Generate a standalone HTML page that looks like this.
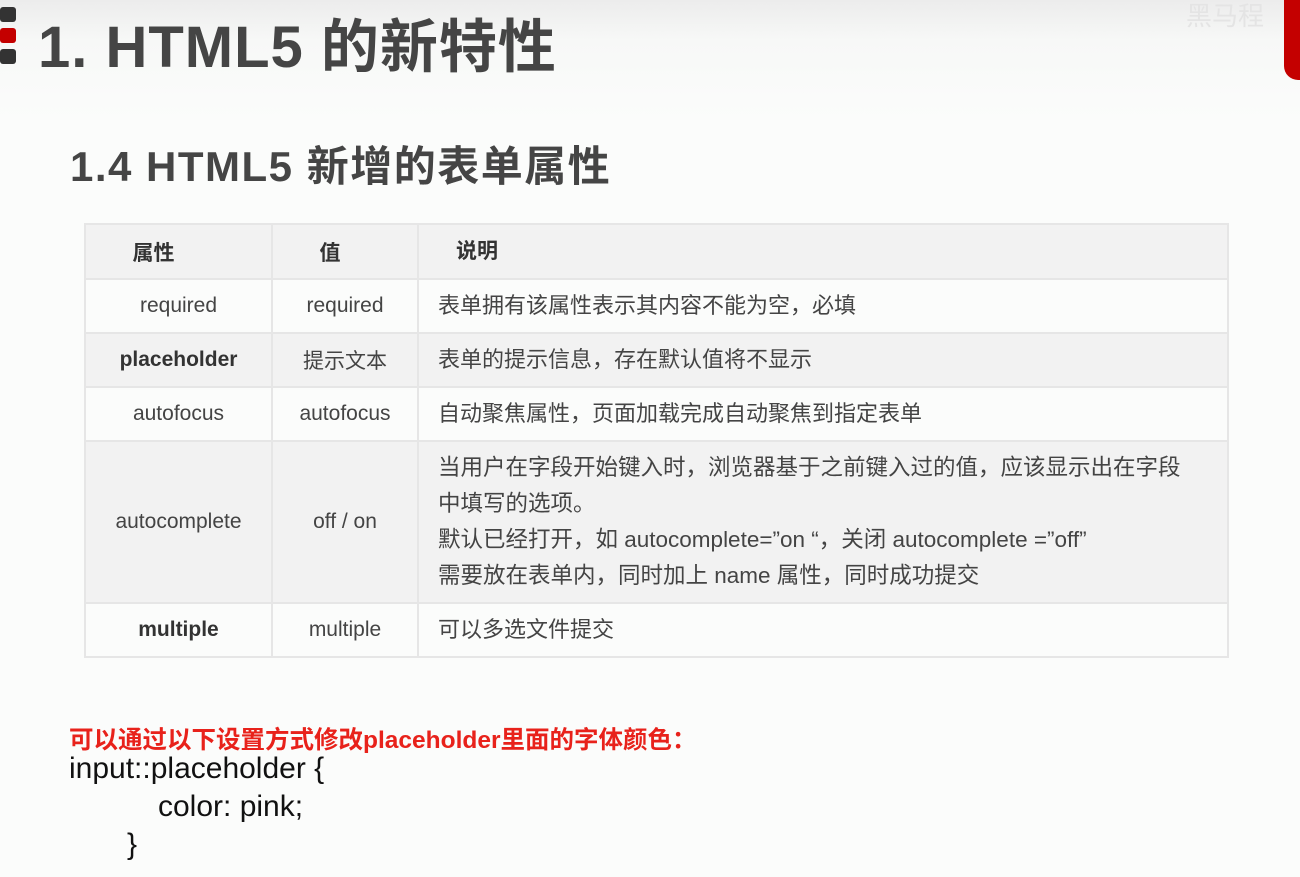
<!DOCTYPE html>
<html><head><meta charset="utf-8"><style>
body{margin:0;width:1300px;height:877px;overflow:hidden;background:linear-gradient(#ececec 0,#f7f8f7 40px,#fbfcfb 120px,#fbfcfb);font-family:"Liberation Sans","Noto Sans CJK SC",sans-serif;color:#444;position:relative}
.a{position:absolute;white-space:nowrap}
.sq{position:absolute;left:0;width:16px;height:15px;border-radius:3px;background:#333}
table{position:absolute;left:84px;top:223px;width:1145px;table-layout:fixed;border-collapse:collapse;font-size:21px;color:#444}
td{border:2px solid #e6e6e6;padding:0;height:52px;text-align:center;white-space:nowrap}
tr.g td{background:#f2f2f2}
td.d{text-align:left;padding-left:19px;line-height:36px;font-size:22px}
b{font-weight:bold;color:#333}
</style></head><body>
<div class="sq" style="top:7px"></div>
<div class="sq" style="top:28px;background:#c40000"></div>
<div class="sq" style="top:49px"></div>
<div class="a" style="left:38px;top:0px;font-size:58px;font-weight:bold;color:#454545;letter-spacing:1px">1. HTML5 的新特性</div>
<div style="position:absolute;left:1284px;top:0;width:20px;height:80px;background:#c40000;border-bottom-left-radius:14px"></div>
<div class="a" style="left:1186px;top:-4px;font-size:26px;color:#e4e4e4">黑马程</div>
<div class="a" style="left:70px;top:133px;font-size:42px;font-weight:bold;color:#454545;letter-spacing:1.5px">1.4 HTML5 新增的表单属性</div>
<table>
<colgroup><col style="width:187px"><col style="width:146px"><col></colgroup>
<tr class="g"><td style="height:53px"><b style="margin-right:50px">属性</b></td><td><b style="margin-right:30px">值</b></td><td class="d" style="padding-left:37px;font-size:21px"><b>说明</b></td></tr>
<tr><td>required</td><td>required</td><td class="d">表单拥有该属性表示其内容不能为空，必填</td></tr>
<tr class="g"><td><b>placeholder</b></td><td>提示文本</td><td class="d">表单的提示信息，存在默认值将不显示</td></tr>
<tr><td>autofocus</td><td>autofocus</td><td class="d">自动聚焦属性，页面加载完成自动聚焦到指定表单</td></tr>
<tr class="g"><td style="height:160px">autocomplete</td><td>off / on</td><td class="d" style="font-size:22.5px">当用户在字段开始键入时，浏览器基于之前键入过的值，应该显示出在字段<br>中填写的选项。<br>默认已经打开，如 autocomplete=”on “，关闭 autocomplete =”off”<br>需要放在表单内，同时加上 name 属性，同时成功提交</td></tr>
<tr><td><b>multiple</b></td><td>multiple</td><td class="d">可以多选文件提交</td></tr>
</table>
<div class="a" style="left:69px;top:721px;font-size:24.5px;font-weight:bold;color:#e8221b">可以通过以下设置方式修改placeholder里面的字体颜色：</div>
<div class="a" style="left:69px;top:752px;font-size:30px;color:#111">input::placeholder {</div>
<div class="a" style="left:158px;top:790px;font-size:30px;color:#111">color: pink;</div>
<div class="a" style="left:127px;top:828px;font-size:30px;color:#111">}</div>
</body></html>
